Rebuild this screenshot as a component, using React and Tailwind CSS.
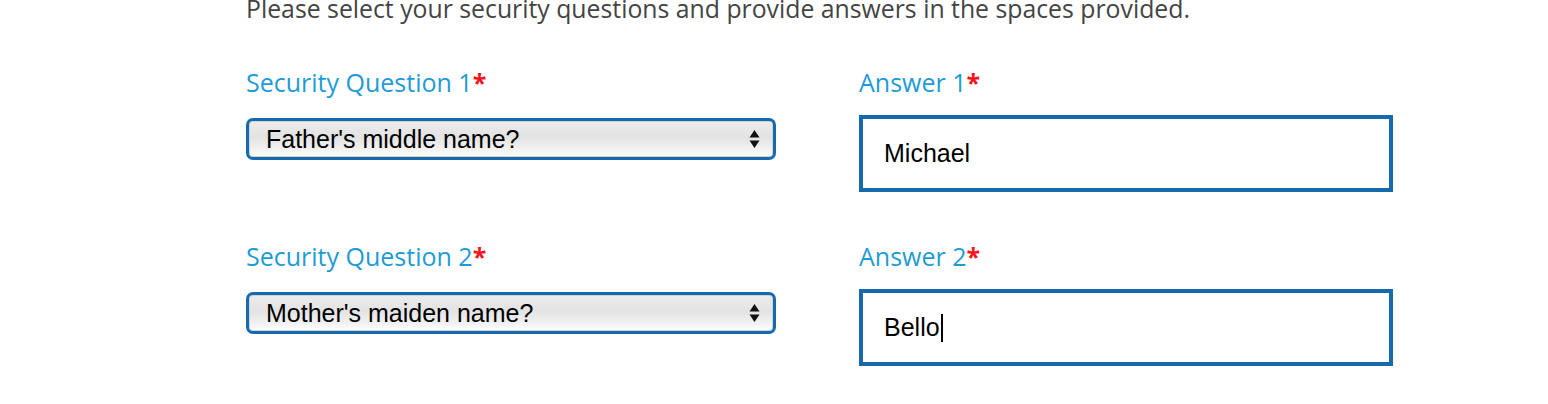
const Arrows = () => (
  <svg width="11" height="20" viewBox="0 0 11 20" aria-hidden>
    <path d="M5.5 1 L10.5 8.5 L0.5 8.5 Z" fill="#111" />
    <path d="M5.5 19 L10.5 11.5 L0.5 11.5 Z" fill="#111" />
  </svg>
);

const Label = ({ children }) => (
  <div className="text-[25px] leading-[30px] text-[#1e9bd7] font-['Open_Sans',sans-serif]">
    {children}
    <span className="font-bold text-[#f5141e]">*</span>
  </div>
);

const FakeSelect = ({ value }) => (
  <div className="mt-[21px] flex h-[42px] w-[530px] items-center justify-between rounded-[7px] border-[3px] border-[#1569ae] bg-[linear-gradient(to_bottom,#ececec_0%,#e3e3e3_45%,#f2f2f2_80%,#ffffff_100%)] pl-[17px] pr-[13px] shadow-[inset_0_0_0_1px_#d2d2d2]">
    <span className="text-[25px] leading-none text-black font-['Liberation_Sans',Arial,sans-serif]">
      {value}
    </span>
    <Arrows />
  </div>
);

const AnswerBox = ({ value, caret }) => (
  <div className="mt-[18px] flex h-[77px] w-[534px] items-center border-4 border-[#1769ae] bg-white pl-[21px]">
    <span className="text-[25px] leading-none text-black font-['Liberation_Sans',Arial,sans-serif]">
      {value}
    </span>
    {caret && <span className="ml-px h-[28px] w-[2px] bg-black" />}
  </div>
);

const QuestionRow = ({ n, question, answer, caret }) => (
  <div className="grid grid-cols-[530px_534px] gap-x-[83px]">
    <div className="flex flex-col">
      <Label>Security Question {n}</Label>
      <FakeSelect value={question} />
    </div>
    <div className="flex flex-col">
      <Label>Answer {n}</Label>
      <AnswerBox value={answer} caret={caret} />
    </div>
  </div>
);

export default function App() {
  return (
    <div className="h-[404px] w-[1548px] overflow-hidden bg-white pl-[246px]">
      <p className="-mt-[7px] mb-[44px] text-[24.8px] leading-[30px] text-[#444] font-['Open_Sans',sans-serif]">
        Please select your security questions and provide answers in the spaces provided.
      </p>
      <div className="flex flex-col gap-y-[49px]">
        <QuestionRow n={1} question="Father's middle name?" answer="Michael" />
        <QuestionRow n={2} question="Mother's maiden name?" answer="Bello" caret />
      </div>
    </div>
  );
}
